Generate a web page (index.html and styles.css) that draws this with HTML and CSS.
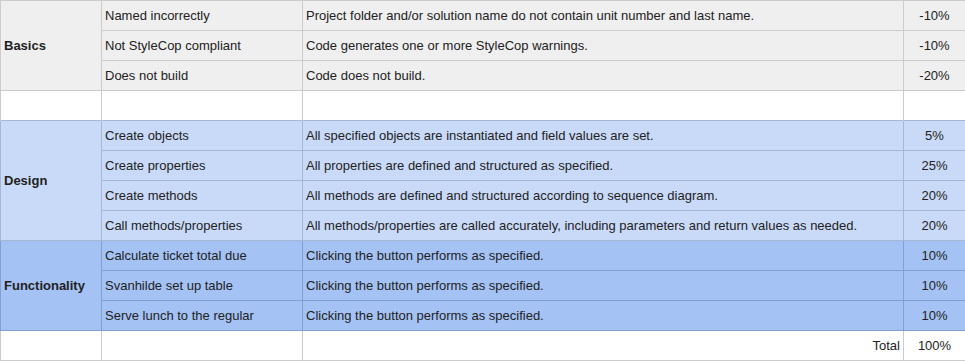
FILE: index.html
```html
<!DOCTYPE html>
<html>
<head>
<meta charset="utf-8">
<link rel="stylesheet" href="styles.css">
</head>
<body>
<table class="rubric">
  <colgroup>
    <col class="c-cat"><col class="c-item"><col class="c-desc"><col class="c-pct">
  </colgroup>
  <tbody>
    <tr class="basics">
      <td class="cat" rowspan="3">Basics</td>
      <td>Named incorrectly</td>
      <td>Project folder and/or solution name do not contain unit number and last name.</td>
      <td class="pct">-10%</td>
    </tr>
    <tr class="basics">
      <td>Not StyleCop compliant</td>
      <td>Code generates one or more StyleCop warnings.</td>
      <td class="pct">-10%</td>
    </tr>
    <tr class="basics">
      <td>Does not build</td>
      <td>Code does not build.</td>
      <td class="pct">-20%</td>
    </tr>
    <tr class="blank">
      <td></td><td></td><td></td><td></td>
    </tr>
    <tr class="design">
      <td class="cat" rowspan="4">Design</td>
      <td>Create objects</td>
      <td>All specified objects are instantiated and field values are set.</td>
      <td class="pct">5%</td>
    </tr>
    <tr class="design">
      <td>Create properties</td>
      <td>All properties are defined and structured as specified.</td>
      <td class="pct">25%</td>
    </tr>
    <tr class="design">
      <td>Create methods</td>
      <td>All methods are defined and structured according to sequence diagram.</td>
      <td class="pct">20%</td>
    </tr>
    <tr class="design">
      <td>Call methods/properties</td>
      <td>All methods/properties are called accurately, including parameters and return values as needed.</td>
      <td class="pct">20%</td>
    </tr>
    <tr class="func">
      <td class="cat" rowspan="3">Functionality</td>
      <td>Calculate ticket total due</td>
      <td>Clicking the button performs as specified.</td>
      <td class="pct">10%</td>
    </tr>
    <tr class="func">
      <td>Svanhilde set up table</td>
      <td>Clicking the button performs as specified.</td>
      <td class="pct">10%</td>
    </tr>
    <tr class="func">
      <td>Serve lunch to the regular</td>
      <td>Clicking the button performs as specified.</td>
      <td class="pct">10%</td>
    </tr>
    <tr class="total">
      <td></td>
      <td></td>
      <td class="total-label">Total</td>
      <td class="pct">100%</td>
    </tr>
  </tbody>
</table>
</body>
</html>
```

FILE: styles.css
```css
html, body {
  margin: 0;
  padding: 0;
  background: #ffffff;
}

.rubric {
  border-collapse: collapse;
  table-layout: fixed;
  width: 965px;
  font-family: "Liberation Sans", Arial, sans-serif;
  font-size: 13px;
  color: #222222;
}

.c-cat { width: 101px; }
.c-item { width: 201px; }
.c-desc { width: 601px; }
.c-pct { width: 62px; }

.rubric td {
  height: 29px;
  padding: 0 3px;
  border: 1px solid #cccccc;
  vertical-align: middle;
  white-space: nowrap;
  overflow: hidden;
  line-height: 16px;
}

.rubric .cat {
  font-weight: bold;
}

.rubric .pct {
  text-align: center;
}

.rubric .total-label {
  text-align: right;
}

.basics td {
  background: #efefef;
  border-color: #cccccc;
}

.blank td {
  background: #ffffff;
  border-bottom-style: none;
}

.design td {
  background: #c9daf8;
  border-color: #a5b6d6;
}

.func td {
  background: #a4c2f4;
  border-color: #809fd2;
}

.total td {
  background: #ffffff;
}
```
